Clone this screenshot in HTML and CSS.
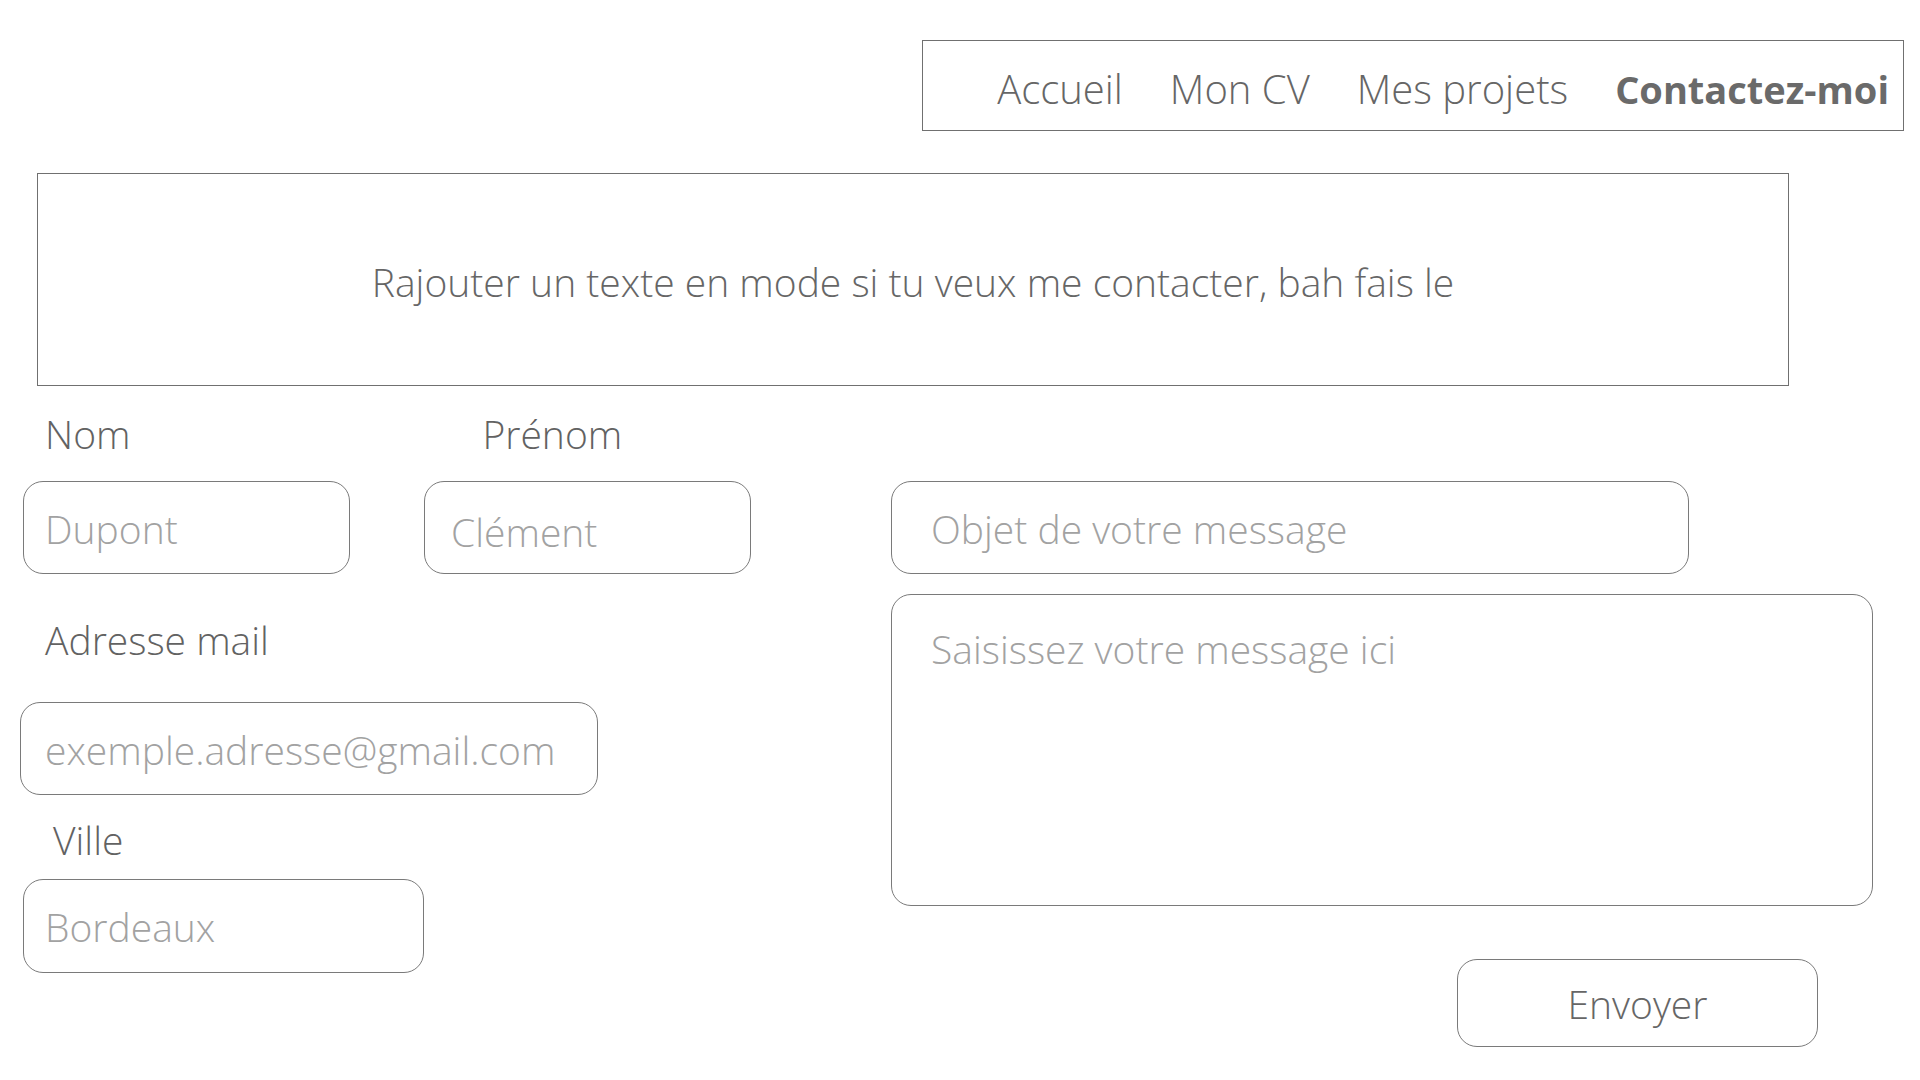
FILE: index.html
```html
<!DOCTYPE html>
<html lang="fr">
<head>
<meta charset="utf-8">
<title>Contactez-moi</title>
<link rel="stylesheet" href="styles.css">
</head>
<body>
<header class="top">
  <nav class="nav">
    <a class="nav-link">Accueil</a>
    <a class="nav-link">Mon CV</a>
    <a class="nav-link">Mes projets</a>
    <a class="nav-link active">Contactez-moi</a>
  </nav>
</header>
<section class="intro">
  <p>Rajouter un texte en mode si tu veux me contacter, bah fais le</p>
</section>
<form class="contact">
  <div class="left">
    <div class="label-row">
      <span class="label label-nom">Nom</span>
      <span class="label label-prenom">Prénom</span>
    </div>
    <div class="field-row">
      <div class="field field-nom"><span class="ph">Dupont</span></div>
      <div class="field field-prenom"><span class="ph">Clément</span></div>
    </div>
    <span class="label label-mail">Adresse mail</span>
    <div class="field field-mail"><span class="ph">exemple.adresse@gmail.com</span></div>
    <span class="label label-ville">Ville</span>
    <div class="field field-ville"><span class="ph">Bordeaux</span></div>
  </div>
  <div class="right">
    <div class="field field-objet"><span class="ph">Objet de votre message</span></div>
    <div class="message"><span class="ph">Saisissez votre message ici</span></div>
    <div class="send-row"><button type="button" class="send">Envoyer</button></div>
  </div>
</form>
</body>
</html>
```
FILE: styles.css
```css
html, body {
  margin: 0;
  padding: 0;
  background: #ffffff;
}
body {
  font-family: "Open Sans", "Noto Sans", sans-serif;
  font-weight: 350;
  color: #666666;
  width: 1920px;
  height: 1080px;
  overflow: hidden;
}
.top {
  display: flex;
  justify-content: flex-end;
  padding: 40px 16px 0 0;
}
.nav {
  box-sizing: border-box;
  width: 982px;
  height: 91px;
  border: 1px solid #707070;
  display: flex;
  justify-content: flex-end;
  align-items: center;
  gap: 47px;
  padding: 6px 14px 0 0;
}
.nav-link {
  font-size: 40px;
  color: #666666;
  text-decoration: none;
  line-height: 48px;
}
.nav-link.active {
  font-weight: 700;
  font-size: 38px;
  color: #6a6a6a;
}
.intro {
  box-sizing: border-box;
  margin: 42px 0 0 37px;
  width: 1752px;
  height: 213px;
  border: 1px solid #707070;
  display: flex;
  align-items: center;
  justify-content: center;
}
.intro p {
  margin: 4px 0 0 0;
  font-size: 39px;
  line-height: 48px;
}
.contact {
  display: flex;
}
.left {
  width: 891px;
  display: flex;
  flex-direction: column;
  align-items: flex-start;
}
.label {
  display: block;
  font-size: 39px;
  line-height: 48px;
  color: #626262;
}
.label-row {
  display: flex;
  margin-top: 24px;
}
.label-nom { margin-left: 45px; }
.label-prenom { margin-left: 352px; }
.field-row {
  display: flex;
  margin-top: 23px;
}
.field {
  box-sizing: border-box;
  height: 93px;
  border: 1px solid #7a7a7a;
  border-radius: 20px;
  display: flex;
  align-items: center;
}
.ph {
  font-size: 39px;
  line-height: 48px;
  color: #a2a2a2;
  white-space: nowrap;
}
.field-nom {
  margin-left: 23px;
  width: 327px;
  padding: 2px 0 0 21px;
}
.field-prenom {
  margin-left: 74px;
  width: 327px;
  padding: 8px 0 0 26px;
}
.label-mail {
  margin: 42px 0 0 45px;
}
.field-mail {
  margin: 38px 0 0 20px;
  width: 578px;
  padding: 2px 0 0 24px;
}
.label-ville {
  margin: 21px 0 0 53px;
}
.field-ville {
  margin: 15px 0 0 23px;
  width: 401px;
  height: 94px;
  padding: 2px 0 0 21px;
}
.right {
  display: flex;
  flex-direction: column;
  align-items: flex-start;
  margin-top: 95px;
}
.field-objet {
  width: 798px;
  padding: 2px 0 0 39px;
}
.message {
  box-sizing: border-box;
  margin-top: 20px;
  width: 982px;
  height: 312px;
  border: 1px solid #7a7a7a;
  border-radius: 20px;
  padding: 30px 0 0 39px;
}
.send-row {
  display: flex;
  margin-top: 53px;
  padding-left: 566px;
}
.send {
  box-sizing: border-box;
  width: 361px;
  height: 88px;
  border: 1px solid #7a7a7a;
  border-radius: 20px;
  background: #ffffff;
  font-family: "Open Sans", "Noto Sans", sans-serif;
  font-weight: 350;
  font-size: 39px;
  line-height: 48px;
  color: #666666;
  padding: 2px 0 0 0;
}
```
